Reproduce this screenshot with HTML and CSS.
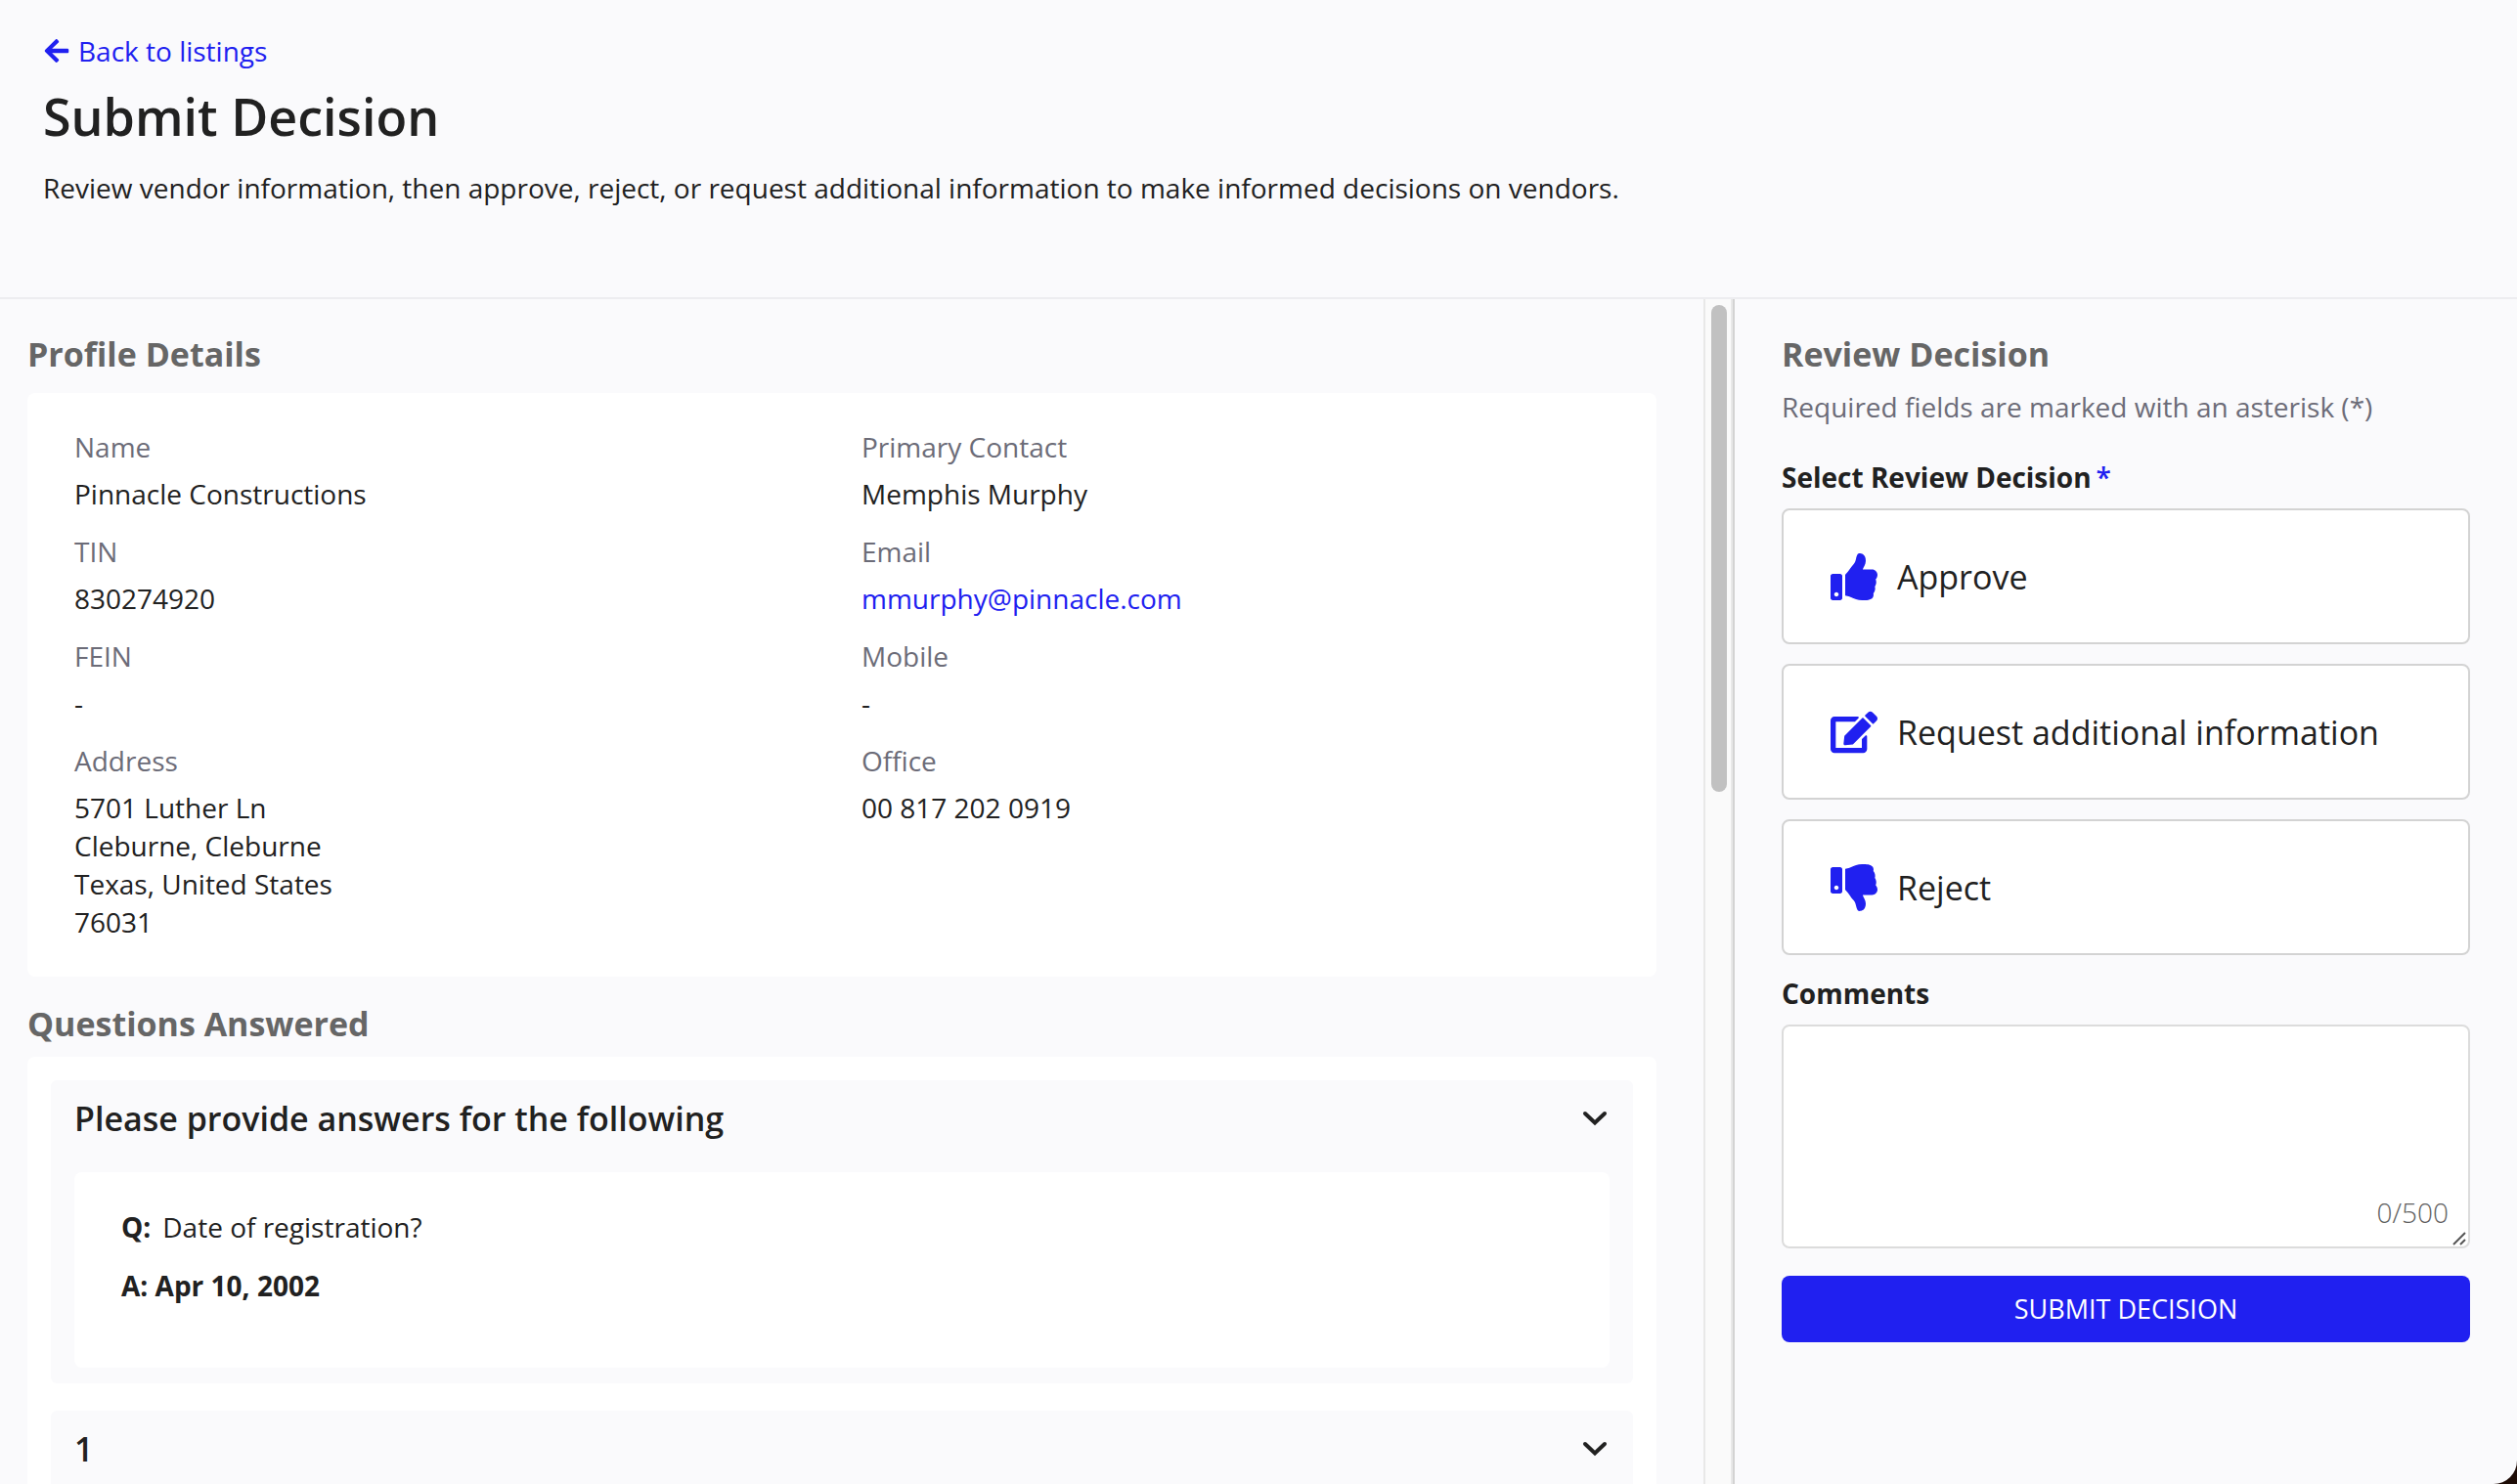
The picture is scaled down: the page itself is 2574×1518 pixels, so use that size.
FILE: index.html
```html
<!DOCTYPE html>
<html lang="en">
<head>
<meta charset="utf-8">
<title>Submit Decision</title>
<link rel="stylesheet" href="styles.css">
</head>
<body>
<header class="page-header">
  <a class="back-link" href="#listings">
    <svg class="back-icon" viewBox="0 0 448 512" aria-hidden="true"><path d="M257.500 445.100l-22.200 22.200c-9.400 9.400-24.600 9.400-33.900 0L7 273c-9.400-9.400-9.400-24.600 0-33.900L201.400 44.700c9.400-9.400 24.600-9.400 33.900 0l22.200 22.200c9.500 9.500 9.300 25-.4 34.300L136.600 216H424c13.300 0 24 10.700 24 24v32c0 13.300-10.700 24-24 24H136.600l120.500 114.800c9.800 9.300 10 24.800.4 34.300z"/></svg>
    Back to listings</a>
  <h1 class="page-title">Submit Decision</h1>
  <p class="page-intro">Review vendor information, then approve, reject, or request additional information to make informed decisions on vendors.</p>
</header>
<main class="workspace">
  <section class="details">
    <h2 class="section-title">Profile Details</h2>
    <div class="card profile">
      <dl class="fields">
        <div class="field"><dt>Name</dt><dd>Pinnacle Constructions</dd></div>
        <div class="field"><dt>TIN</dt><dd>830274920</dd></div>
        <div class="field"><dt>FEIN</dt><dd>-</dd></div>
        <div class="field"><dt>Address</dt><dd>5701 Luther Ln<br>Cleburne, Cleburne<br>Texas, United States<br>76031</dd></div>
      </dl>
      <dl class="fields">
        <div class="field"><dt>Primary Contact</dt><dd>Memphis Murphy</dd></div>
        <div class="field"><dt>Email</dt><dd><a href="mailto:mmurphy@pinnacle.com">mmurphy@pinnacle.com</a></dd></div>
        <div class="field"><dt>Mobile</dt><dd>-</dd></div>
        <div class="field"><dt>Office</dt><dd>00 817 202 0919</dd></div>
      </dl>
    </div>
    <h2 class="section-title">Questions Answered</h2>
    <div class="card questions">
      <section class="accordion">
        <h3 class="accordion-heading"><button class="accordion-toggle" type="button" aria-expanded="true">Please provide answers for the following
          <svg class="chevron" viewBox="0 0 28 16" aria-hidden="true"><path d="M3 3l10 9.500L23 3"/></svg></button></h3>
        <div class="answer-card">
          <p><b class="question-mark">Q:</b>Date of registration?</p>
          <p><b>A: Apr 10, 2002</b></p>
        </div>
      </section>
      <section class="accordion">
        <h3 class="accordion-heading"><button class="accordion-toggle" type="button" aria-expanded="false">1
          <svg class="chevron" viewBox="0 0 28 16" aria-hidden="true"><path d="M3 3l10 9.500L23 3"/></svg></button></h3>
      </section>
    </div>
  </section>
  <div class="scroll-track" aria-hidden="true"><div class="scroll-thumb"></div></div>
  <form class="review">
    <h2 class="section-title">Review Decision</h2>
    <p class="required-note">Required fields are marked with an asterisk (*)</p>
    <fieldset class="decision">
      <legend class="form-label">Select Review Decision<span class="asterisk">*</span></legend>
      <div class="options">
        <label class="option"><input type="radio" name="decision" value="approve">
          <svg class="option-icon" viewBox="0 0 512 512" aria-hidden="true"><path d="M104 224H24c-13.255 0-24 10.745-24 24v240c0 13.255 10.745 24 24 24h80c13.255 0 24-10.745 24-24V248c0-13.255-10.745-24-24-24zM64 472c-13.255 0-24-10.745-24-24s10.745-24 24-24 24 10.745 24 24-10.745 24-24 24zM384 81.452c0 42.416-25.970 66.208-33.277 94.548h101.723c33.397 0 59.397 27.746 59.553 58.098.084 17.938-7.546 37.249-19.439 49.197l-.110.110c9.836 23.337 8.237 56.037-9.308 79.469 8.681 25.895-.069 57.704-16.382 74.757 4.298 17.598 2.244 32.575-6.148 44.632C440.202 511.587 389.616 512 346.839 512l-2.845-.001c-48.287-.017-87.806-17.598-119.560-31.725-15.957-7.099-36.821-15.887-52.651-16.178-6.540-.120-11.783-5.457-11.783-11.998v-213.770c0-3.200 1.282-6.271 3.558-8.521 39.614-39.144 56.648-80.587 89.117-113.111 14.804-14.832 20.188-37.236 25.393-58.902C282.515 39.293 291.817 0 312 0c24 0 72 8 72 81.452z"/></svg>
          <span>Approve</span></label>
        <label class="option"><input type="radio" name="decision" value="info">
          <svg class="option-icon" viewBox="0 0 576 512" aria-hidden="true"><path d="M402.600 83.200l90.200 90.200c3.800 3.800 3.800 10 0 13.800L274.400 405.600l-92.800 10.300c-12.400 1.400-22.900-9.100-21.500-21.500l10.300-92.800L388.800 83.200c3.800-3.800 10-3.800 13.800 0zm162-22.900l-48.800-48.800c-15.200-15.200-39.900-15.200-55.200 0l-35.400 35.400c-3.800 3.800-3.800 10 0 13.800l90.200 90.200c3.800 3.800 10 3.800 13.800 0l35.400-35.400c15.200-15.300 15.200-40 0-55.200zM384 346.200V448H64V128h229.800c3.200 0 6.200-1.300 8.500-3.500l40-40c7.600-7.600 2.200-20.500-8.500-20.500H48C21.500 64 0 85.500 0 112v352c0 26.500 21.500 48 48 48h352c26.500 0 48-21.500 48-48V306.200c0-10.700-12.900-16-20.500-8.500l-40 40c-2.200 2.300-3.500 5.300-3.500 8.500z"/></svg>
          <span>Request additional information</span></label>
        <label class="option"><input type="radio" name="decision" value="reject">
          <svg class="option-icon" viewBox="0 0 512 512" aria-hidden="true"><path d="M0 56v240c0 13.255 10.745 24 24 24h80c13.255 0 24-10.745 24-24V56c0-13.255-10.745-24-24-24H24C10.745 32 0 42.745 0 56zm40 200c0-13.255 10.745-24 24-24s24 10.745 24 24-10.745 24-24 24-24-10.745-24-24zm272 256c-20.183 0-29.485-39.293-33.931-57.795-5.206-21.666-10.589-44.070-25.393-58.902-32.469-32.524-49.503-73.967-89.117-113.111a11.980 11.980 0 0 1-3.558-8.521V59.901c0-6.541 5.243-11.878 11.783-11.998 15.831-.290 36.694-9.079 52.651-16.178C256.189 17.598 295.709.017 343.995 0h2.844c42.777 0 93.363.413 113.774 29.737 8.392 12.057 10.446 27.034 6.148 44.632 16.312 17.053 25.063 48.863 16.382 74.757 17.544 23.432 19.143 56.132 9.308 79.469l.110.110c11.893 11.949 19.523 31.259 19.439 49.197-.156 30.352-26.157 58.098-59.553 58.098H350.723C358.030 364.340 384 388.132 384 430.548 384 504 336 512 312 512z"/></svg>
          <span>Reject</span></label>
      </div>
    </fieldset>
    <label class="form-label comments-label" for="comments">Comments</label>
    <div class="comments">
      <textarea id="comments" maxlength="500"></textarea>
      <span class="counter">0/500</span>
      <svg class="grip" viewBox="0 0 14 14" aria-hidden="true"><path d="M1 13L13 1M8 13l5-5"/></svg>
    </div>
    <button class="submit" type="submit">SUBMIT DECISION</button>
  </form>
</main>
</body>
</html>
```
FILE: styles.css
```css
* { box-sizing: border-box; }

html { height: 100%; background: #1d0b05; }

body {
  margin: 0;
  height: 100%;
  display: flex;
  flex-direction: column;
  overflow: hidden;
  background: #fafafc;
  border-bottom-right-radius: 24px;
  color: #212121;
  font: 28px/40px "Open Sans", "Noto Sans", sans-serif;
}

h1, h2, h3, p, dl, dd { margin: 0; }

a { color: #2020f0; text-decoration: none; }

.page-header {
  flex: none;
  padding: 32px 44px 92px;
  border-bottom: 2px solid #ededf0;
}

.back-link { display: flex; align-items: center; gap: 8px; width: fit-content; }
.back-icon { width: 28px; height: 28px; fill: currentColor; }

.page-title {
  margin-top: 12px;
  font-size: 52px;
  line-height: 70px;
  font-weight: 600;
}

.page-intro { margin-top: 18px; }

.workspace { flex: 1; min-height: 0; display: flex; }

.details { flex: 1; min-width: 0; padding: 32px 48px 0 28px; overflow: hidden; }

.section-title {
  color: #666;
  font-size: 34px;
  line-height: 48px;
  font-weight: 700;
}

.card { background: #fff; border-radius: 8px; }

.profile {
  display: grid;
  grid-template-columns: 1fr 1fr;
  margin: 16px 0 24px;
  padding: 36px 8px 36px 48px;
  line-height: 39px;
}

.fields { display: flex; flex-direction: column; gap: 20px; }
.field { display: flex; flex-direction: column; gap: 9px; }
.field dt { color: #6c6c78; }

.questions {
  display: flex;
  flex-direction: column;
  gap: 28px;
  margin-top: 10px;
  padding: 24px;
}

.accordion { padding: 0 24px 16px; background: #fafafc; border-radius: 6px; }
.accordion-heading { display: flex; }

.accordion-toggle {
  flex: 1;
  display: flex;
  justify-content: space-between;
  align-items: center;
  padding: 15px 0 31px;
  border: 0;
  background: none;
  color: inherit;
  font: 600 34px/48px "Open Sans", "Noto Sans", sans-serif;
  text-align: left;
}

.chevron {
  width: 28px;
  height: 16px;
  fill: none;
  stroke: currentColor;
  stroke-width: 4;
  stroke-linecap: round;
}

.answer-card {
  display: flex;
  flex-direction: column;
  gap: 20px;
  padding: 36px 48px 64px;
  background: #fff;
  border-radius: 8px;
}

.question-mark { margin-right: 12px; }

.scroll-track {
  flex: none;
  width: 30px;
  padding: 6px;
  background: #fafafa;
  border: solid #e8e8e8;
  border-width: 0 2px;
}

.scroll-thumb { width: 16px; height: 41.5%; border-radius: 8px; background: #c1c1c1; }

.review {
  flex: none;
  width: 802px;
  display: flex;
  flex-direction: column;
  padding: 32px 48px 0;
  border-left: 2px solid #d3d3d3;
}

.required-note { margin-top: 10px; color: #6c6c78; }

.decision { margin: 32px 0 0; padding: 0; border: 0; }
.form-label { padding: 0; font-weight: 700; }
.asterisk { margin-left: 5px; color: #2020f0; font-weight: 600; }

.options { display: flex; flex-direction: column; gap: 20px; margin-top: 12px; }

.option {
  position: relative;
  height: 139px;
  display: flex;
  align-items: center;
  gap: 20px;
  padding: 0 48px;
  background: #fff;
  border: 2px solid #d3d3d3;
  border-radius: 8px;
  font-size: 34px;
  line-height: 48px;
}

.option input { position: absolute; opacity: 0; margin: 0; }
.option-icon { width: 48px; height: 48px; fill: #2020f0; }

.comments-label { margin-top: 19px; }

.comments { position: relative; display: flex; margin: 12px 0 28px; }

.comments textarea {
  flex: 1;
  height: 229px;
  padding: 16px;
  border: 2px solid #dcdcdc;
  border-radius: 8px;
  background: #fff;
  color: inherit;
  font: inherit;
  resize: vertical;
}

.comments textarea::-webkit-resizer { background: transparent; }

.counter {
  position: absolute;
  right: 22px;
  bottom: 17px;
  color: #606060;
  font-weight: 300;
}

.grip {
  position: absolute;
  right: 4px;
  bottom: 3px;
  width: 14px;
  height: 14px;
  fill: none;
  stroke: #555;
  stroke-width: 2;
  pointer-events: none;
}

.submit {
  height: 68px;
  border: 0;
  border-radius: 8px;
  background: #2020f0;
  color: #fff;
  font: 500 27px/40px "Open Sans", "Noto Sans", sans-serif;
}
```
